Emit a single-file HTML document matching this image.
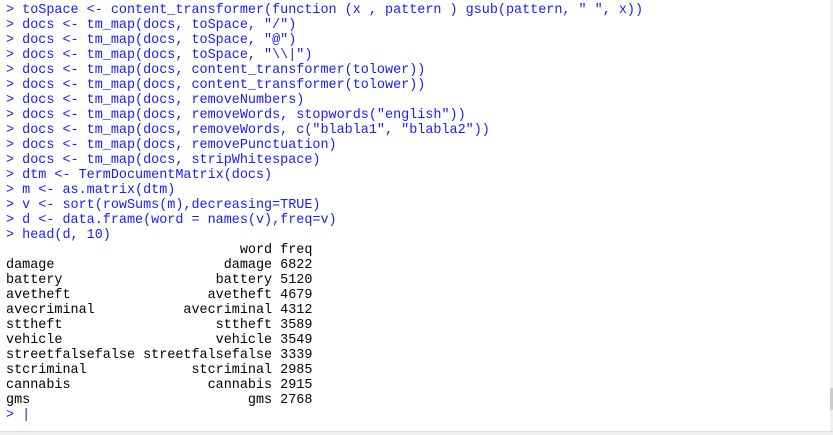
<!DOCTYPE html>
<html><head><meta charset="utf-8"><style>
html,body{margin:0;padding:0;background:#fff;width:833px;height:435px;overflow:hidden;position:relative}
pre{margin:0;position:absolute;left:6px;top:3px;font-family:"Liberation Mono",monospace;font-size:13.45px;line-height:15px;color:#000}
.b{color:#1a1aff}
.sb{position:absolute;right:0;top:0;width:3px;height:431px;background:#f0f0f0}
.th{position:absolute;right:0;top:388px;width:3px;height:22px;background:#cdcdcd}
.bot{position:absolute;left:0;top:431px;width:833px;height:4px;background:#f0f0f0;border-top:1px solid #dcdce0}
</style></head><body>
<pre><span class="b">&gt; toSpace &lt;- content_transformer(function (x , pattern ) gsub(pattern, " ", x))
&gt; docs &lt;- tm_map(docs, toSpace, "/")
&gt; docs &lt;- tm_map(docs, toSpace, "@")
&gt; docs &lt;- tm_map(docs, toSpace, "\\|")
&gt; docs &lt;- tm_map(docs, content_transformer(tolower))
&gt; docs &lt;- tm_map(docs, content_transformer(tolower))
&gt; docs &lt;- tm_map(docs, removeNumbers)
&gt; docs &lt;- tm_map(docs, removeWords, stopwords("english"))
&gt; docs &lt;- tm_map(docs, removeWords, c("blabla1", "blabla2"))
&gt; docs &lt;- tm_map(docs, removePunctuation)
&gt; docs &lt;- tm_map(docs, stripWhitespace)
&gt; dtm &lt;- TermDocumentMatrix(docs)
&gt; m &lt;- as.matrix(dtm)
&gt; v &lt;- sort(rowSums(m),decreasing=TRUE)
&gt; d &lt;- data.frame(word = names(v),freq=v)
&gt; head(d, 10)</span>
                             word freq
damage                     damage 6822
battery                   battery 5120
avetheft                 avetheft 4679
avecriminal           avecriminal 4312
sttheft                   sttheft 3589
vehicle                   vehicle 3549
streetfalsefalse streetfalsefalse 3339
stcriminal             stcriminal 2985
cannabis                 cannabis 2915
gms                           gms 2768
<span class="b">&gt; |</span></pre>
<div class="sb"></div><div class="th"></div><div class="bot"></div>
</body></html>
